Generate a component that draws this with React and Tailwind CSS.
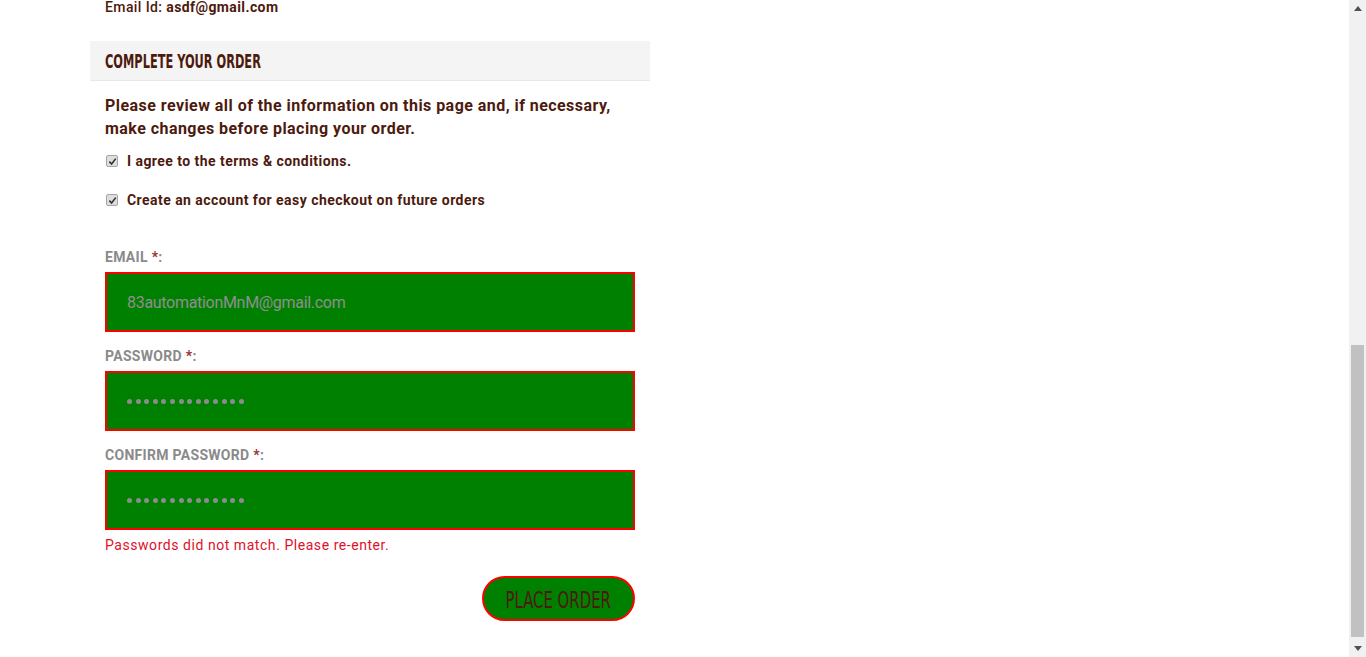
import React from "react";

const body = { fontFamily: '"Roboto", "Liberation Sans", sans-serif' };
const cond = { fontFamily: '"DejaVu Sans Condensed", "Roboto", sans-serif' };

function Check({ label }) {
  return (
    <div className="flex items-center h-[20px]">
      <span className="ml-[1px] w-[12px] h-[12px] rounded-[2px] border border-[#a5a5a5] bg-[#dedede] flex items-center justify-center">
        <svg width="9" height="9" viewBox="0 0 10 10">
          <path d="M1.5 5.2 L4 7.8 L8.6 1.8" stroke="#333" strokeWidth="1.8" fill="none" />
        </svg>
      </span>
      <span className="ml-[9px] text-[14px] font-bold text-[#4d1a0e] tracking-[0.45px]">{label}</span>
    </div>
  );
}

function Dots() {
  return (
    <div className="flex items-center gap-[3.6px]">
      {Array.from({ length: 14 }).map((_, i) => (
        <span key={i} className="w-[5px] h-[5px] rounded-full bg-[#8c8c8c]" />
      ))}
    </div>
  );
}

function Field({ label, value, password, mt }) {
  return (
    <div className={mt}>
      <div className="text-[14px] font-bold text-[#8a8a8a] leading-[18px] tracking-[0.3px]">
        {label} <span className="text-[#a03030]">*</span>:
      </div>
      <div className="mt-[6px] w-[530px] h-[60px] bg-[#008000] border-2 border-[#ff0000] pl-[20px] flex items-center">
        {password ? (
          <Dots />
        ) : (
          <span className="text-[16px] text-[#8f8f8f] tracking-[-0.3px] pt-[1px]">{value}</span>
        )}
      </div>
    </div>
  );
}

export default function App() {
  return (
    <div className="w-[1366px] h-[657px] bg-white flex overflow-hidden" style={body}>
      <div className="flex-1 relative">
        <div className="ml-[90px] w-[560px]">
          <div className="pl-[15px] h-[41px] text-[14px] text-[#4d1a0e] leading-[14px] tracking-[0.4px] font-medium">
            Email Id: <span className="font-bold">asdf@gmail.com</span>
          </div>
          <div className="h-[40px] bg-[#f4f4f4] border-b border-[#e8e8e8] pl-[15px] flex items-center pt-[2px]">
            <span className="text-[19px] text-[#4d1a0e] uppercase font-bold inline-block scale-x-[0.665] origin-left whitespace-nowrap" style={cond}>
              Complete Your Order
            </span>
          </div>
          <div className="px-[15px]">
            <p className="mt-[13px] text-[16px] font-bold leading-[23px] text-[#4d1a0e] tracking-[0.45px]">
              Please review all of the information on this page and, if necessary, make changes before placing your order.
            </p>
            <div className="mt-[11px]">
              <Check label="I agree to the terms & conditions." />
            </div>
            <div className="mt-[19px]">
              <Check label="Create an account for easy checkout on future orders" />
            </div>
            <Field mt="mt-[38px]" label="EMAIL" value="83automationMnM@gmail.com" />
            <Field mt="mt-[15px]" label="PASSWORD" password />
            <Field mt="mt-[15px]" label="CONFIRM PASSWORD" password />
            <div className="mt-[6px] text-[14px] text-[#e0102a] leading-[18px] tracking-[0.55px]">
              Passwords did not match. Please re-enter.
            </div>
            <div className="flex justify-end w-[530px] mt-[22px]">
              <button className="w-[153px] h-[45px] rounded-full bg-[#008000] border-2 border-[#ff0000] flex items-center justify-center overflow-hidden pt-[3px]">
                <span className="text-[23px] text-[#4d1a0e] uppercase inline-block scale-x-[0.72] whitespace-nowrap" style={cond}>
                  Place Order
                </span>
              </button>
            </div>
          </div>
        </div>
      </div>
      <div className="w-[17px] h-full bg-[#f1f1f1] flex flex-col items-center">
        <div className="h-[17px] flex items-center justify-center">
          <svg width="8" height="5" viewBox="0 0 8 5"><path d="M0 5 L4 0 L8 5 Z" fill="#505050" /></svg>
        </div>
        <div className="flex-1 w-full flex flex-col">
          <div className="h-[328px]" />
          <div className="mx-[2px] h-[292px] bg-[#c1c1c1]" />
        </div>
        <div className="h-[17px] flex items-center justify-center">
          <svg width="8" height="5" viewBox="0 0 8 5"><path d="M0 0 L4 5 L8 0 Z" fill="#505050" /></svg>
        </div>
      </div>
    </div>
  );
}
